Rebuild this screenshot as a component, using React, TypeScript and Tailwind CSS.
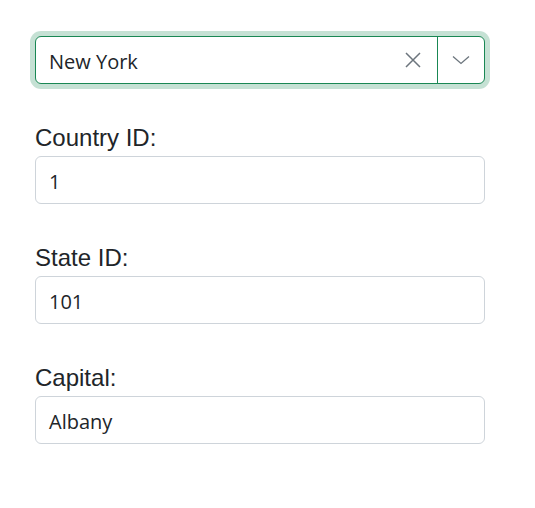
const fields = [
  { label: 'Country ID:', value: '1' },
  { label: 'State ID:', value: '101' },
  { label: 'Capital:', value: 'Albany' },
]

const inputFont = "font-['Open_Sans',sans-serif]"

const App = () => {
  return (
    <div className="min-h-screen bg-white pt-[36px] pl-[35px]">
      <div className="w-[450px]">
        <div className="flex h-[48px] items-stretch rounded-[6px] border border-[#198754] bg-white shadow-[0_0_0_5px_rgba(25,135,84,0.25)]">
          <div className={`flex flex-1 items-center pl-[13px] pt-[3px] text-[20px] text-[#212529] ${inputFont}`}>
            New York
          </div>
          <div className="flex w-[48px] items-center justify-center">
            <svg width="16" height="16" viewBox="0 0 16 16" fill="none">
              <path d="M1 1L15 15M15 1L1 15" stroke="#6c757d" strokeWidth="1.5" />
            </svg>
          </div>
          <div className="w-px bg-[#198754]" />
          <div className="flex w-[46px] items-center justify-center">
            <svg width="18" height="10" viewBox="0 0 18 10" fill="none">
              <path d="M1 1.5L9 8.5L17 1.5" stroke="#6c757d" strokeWidth="1.3" />
            </svg>
          </div>
        </div>

        {fields.map(field => (
          <div key={field.label} className="mt-[36px]">
            <label className="block text-[24px] leading-[36px] text-[#212529] font-['Liberation_Sans',Arial,sans-serif]">
              {field.label}
            </label>
            <div
              className={`flex h-[48px] items-center rounded-[6px] border border-[#ced4da] px-[13px] pt-[3px] text-[20px] text-[#212529] ${inputFont}`}
            >
              {field.value}
            </div>
          </div>
        ))}
      </div>
    </div>
  )
}

export default App
